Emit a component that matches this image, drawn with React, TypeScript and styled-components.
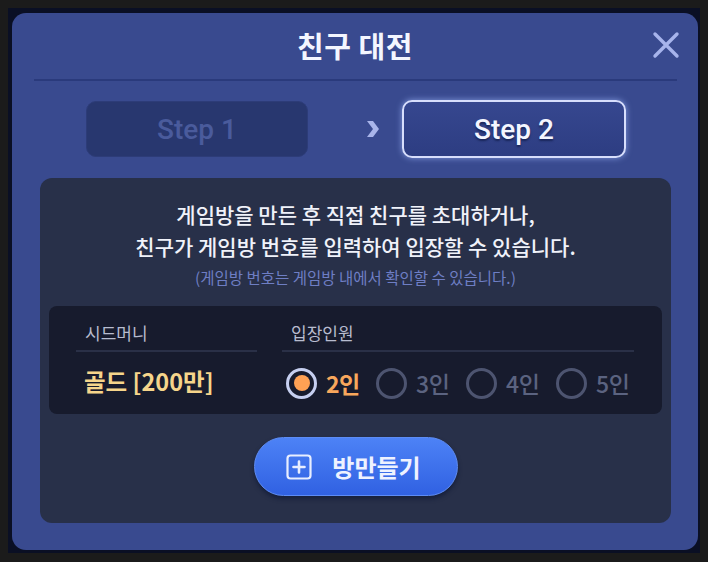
import React, { useState } from 'react';
import styled, { createGlobalStyle } from 'styled-components';

const GlobalStyle = createGlobalStyle`
  html, body {
    margin: 0;
    padding: 0;
    background: #1b1b1b;
  }
  body {
    font-family: "Noto Sans CJK KR", "Noto Sans", sans-serif;
  }
`;

const COUNTS = [2, 3, 4, 5];

const App = () => {
  const [count, setCount] = useState(2);

  return (
    <>
      <GlobalStyle />
      <Backdrop>
        <Modal>
          <Header>
            <Title>친구 대전</Title>
            <CloseButton aria-label="닫기">
              <svg width="28" height="28" viewBox="0 0 28 28">
                <path d="M3 3 L25 25 M25 3 L3 25" stroke="#a7b4ec" strokeWidth="3.4" strokeLinecap="round" />
              </svg>
            </CloseButton>
          </Header>
          <Divider />
          <Steps>
            <StepBox active={false}>Step 1</StepBox>
            <Chevron>
              <svg width="14" height="18" viewBox="0 0 14 18">
                <path d="M1 1 L7 1 L13 9 L7 17 L1 17 L7 9 Z" fill="#a9b5ea" />
              </svg>
            </Chevron>
            <StepBox active>Step 2</StepBox>
          </Steps>
          <Panel>
            <Description>
              게임방을 만든 후 직접 친구를 초대하거나,
              <br />
              친구가 게임방 번호를 입력하여 입장할 수 있습니다.
            </Description>
            <Note>(게임방 번호는 게임방 내에서 확인할 수 있습니다.)</Note>
            <Table>
              <SeedColumn>
                <ColumnLabel>시드머니</ColumnLabel>
                <SeedValue>골드 [200만]</SeedValue>
              </SeedColumn>
              <PlayerColumn>
                <ColumnLabel>입장인원</ColumnLabel>
                <RadioRow>
                  {COUNTS.map((n) => (
                    <RadioOption key={n} onClick={() => setCount(n)}>
                      <RadioCircle checked={count === n} />
                      <RadioText checked={count === n}>{n}인</RadioText>
                    </RadioOption>
                  ))}
                </RadioRow>
              </PlayerColumn>
            </Table>
            <CreateButton>
              <svg width="26" height="26" viewBox="0 0 26 26">
                <rect x="1.5" y="1.5" width="23" height="23" rx="3" fill="none" stroke="#e8eeff" strokeWidth="2.2" />
                <path d="M13 7.5 V18.5 M7.5 13 H18.5" stroke="#e8eeff" strokeWidth="2.6" strokeLinecap="round" />
              </svg>
              <span>방만들기</span>
            </CreateButton>
          </Panel>
        </Modal>
      </Backdrop>
    </>
  );
};

const Backdrop = styled.div`
  margin: 8px;
  width: 692px;
  height: 545px;
  box-sizing: border-box;
  padding: 5px 2px 3px 4px;
  background: #0a0f24;
`;

const Modal = styled.div`
  width: 686px;
  height: 537px;
  box-sizing: border-box;
  background: #394a8f;
  border-radius: 14px;
  display: flex;
  flex-direction: column;
`;

const Header = styled.div`
  position: relative;
  height: 66px;
  box-sizing: border-box;
  padding-bottom: 3px;
  display: flex;
  align-items: center;
  justify-content: center;
`;

const Title = styled.h1`
  margin: 0;
  font-size: 29px;
  font-weight: 700;
  color: #f4f6ff;
  letter-spacing: 0.5px;
`;

const CloseButton = styled.button`
  position: absolute;
  right: 18px;
  top: 18px;
  width: 28px;
  height: 28px;
  padding: 0;
  border: none;
  background: none;
  display: flex;
`;

const Divider = styled.div`
  height: 2px;
  margin: 0 21px 0 22px;
  background: #2a3a7c;
`;

const Steps = styled.div`
  display: flex;
  align-items: center;
  padding: 19px 0 0 74px;
`;

const StepBox = styled.div<{ active: boolean }>`
  box-sizing: border-box;
  width: ${({ active }) => (active ? '224px' : '222px')};
  height: ${({ active }) => (active ? '58px' : '56px')};
  border-radius: 10px;
  display: flex;
  align-items: center;
  justify-content: center;
  font-family: Roboto, "Noto Sans", sans-serif;
  font-size: 28px;
  font-weight: 500;
  color: ${({ active }) => (active ? '#f4f6ff' : '#4a5b9c')};
  background: ${({ active }) =>
    active ? 'linear-gradient(#36478f, #2d3d82)' : '#28376f'};
  border: ${({ active }) => (active ? '2px solid #d7defc' : '1px solid #2d3c78')};
  box-shadow: ${({ active }) => (active ? '0 0 6px rgba(160, 185, 255, 0.7)' : 'none')};
  text-shadow: ${({ active }) => (active ? '0 2px 2px rgba(10, 20, 60, 0.6)' : 'none')};
`;

const Chevron = styled.div`
  display: flex;
  margin: 0 22px 0 58px;
`;

const Panel = styled.div`
  margin: 20px 27px 27px 28px;
  flex: 1;
  background: #283049;
  border-radius: 12px;
  padding: 20px 9px 0;
  display: flex;
  flex-direction: column;
  align-items: center;
`;

const Description = styled.p`
  margin: 0;
  text-align: center;
  font-size: 21px;
  line-height: 32px;
  font-weight: 500;
  color: #f0f2fa;
`;

const Note = styled.p`
  margin: 0;
  text-align: center;
  font-size: 15.5px;
  line-height: 30px;
  color: #6e7ec4;
`;

const Table = styled.div`
  margin-top: 14px;
  align-self: stretch;
  height: 108px;
  background: #171b2d;
  border-radius: 8px;
  display: flex;
  padding: 0 28px 0 27px;
  gap: 25px;
`;

const SeedColumn = styled.div`
  width: 181px;
  display: flex;
  flex-direction: column;
`;

const PlayerColumn = styled.div`
  flex: 1;
  display: flex;
  flex-direction: column;
`;

const ColumnLabel = styled.div`
  height: 46px;
  box-sizing: border-box;
  padding: 14px 0 0 9px;
  font-size: 17px;
  color: #b7bccf;
  border-bottom: 2px solid #2a3047;
`;

const SeedValue = styled.div`
  padding: 12px 0 0 8px;
  font-size: 23.5px;
  font-weight: 700;
  color: #f6d58b;
`;

const RadioRow = styled.div`
  display: flex;
  align-items: center;
  padding: 14px 0 0 4px;
  gap: 14px;
  white-space: nowrap;
`;

const RadioOption = styled.label`
  display: flex;
  flex-shrink: 0;
  align-items: center;
  gap: 9px;
  cursor: pointer;
`;

const RadioCircle = styled.span<{ checked: boolean }>`
  box-sizing: border-box;
  flex-shrink: 0;
  width: 31px;
  height: 31px;
  border-radius: 50%;
  border: 3px solid ${({ checked }) => (checked ? '#c6cff0' : '#4d5470')};
  display: flex;
  align-items: center;
  justify-content: center;
  &::after {
    content: '';
    width: 16px;
    height: 16px;
    border-radius: 50%;
    background: ${({ checked }) => (checked ? '#ffa154' : 'transparent')};
  }
`;

const RadioText = styled.span<{ checked: boolean }>`
  width: 36px;
  font-size: 23px;
  letter-spacing: -0.5px;
  font-weight: ${({ checked }) => (checked ? 700 : 500)};
  color: ${({ checked }) => (checked ? '#f8a75c' : '#5b6380')};
`;

const CreateButton = styled.button`
  margin-top: 23px;
  width: 204px;
  height: 59px;
  border-radius: 30px;
  border: 1px solid #5d8cf5;
  background: linear-gradient(#4d82f6, #3061e2);
  box-shadow: 0 3px 4px rgba(10, 20, 50, 0.6);
  display: flex;
  align-items: center;
  justify-content: center;
  gap: 20px;
  padding: 0 4px 0 0;
  font-family: "Noto Sans CJK KR", sans-serif;
  font-size: 24px;
  font-weight: 700;
  color: #eef2ff;
`;

export default App;
